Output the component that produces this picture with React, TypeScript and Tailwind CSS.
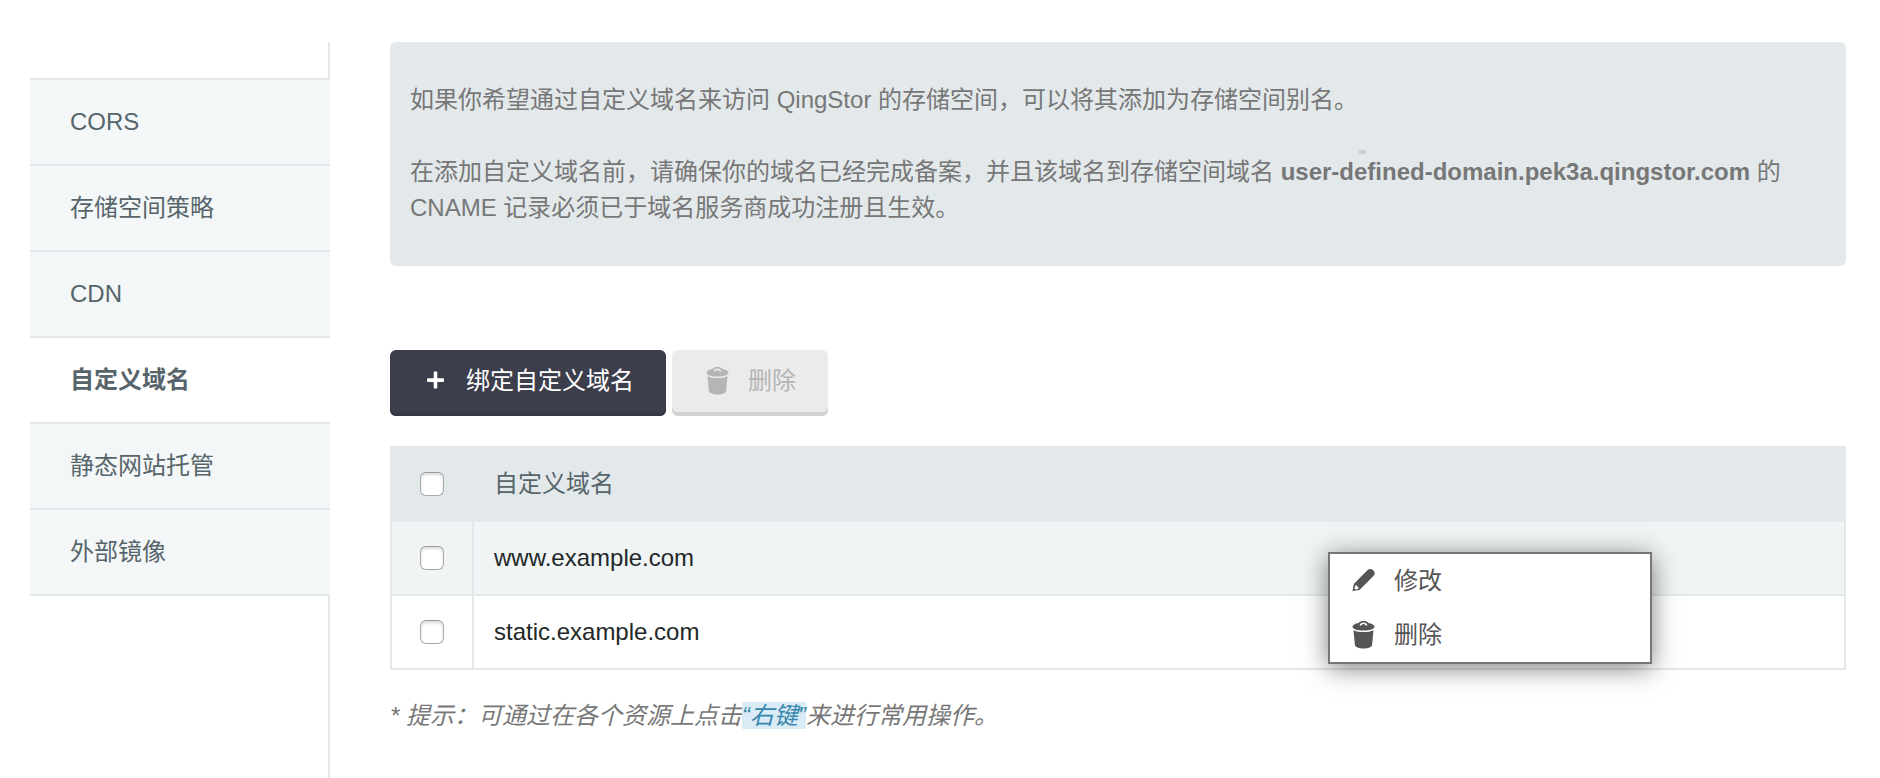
import type { ReactNode } from 'react';

const navItems = ['CORS', '存储空间策略', 'CDN', '自定义域名', '静态网站托管', '外部镜像'];
const activeItem = '自定义域名';
const domains = ['www.example.com', 'static.example.com'];

function PlusIcon() {
  return (
    <svg width="28" height="28" viewBox="0 0 28 28" fill="currentColor" aria-hidden="true">
      <rect x="5" y="11.300" width="17" height="3.600" rx="1" />
      <rect x="11.700" y="4.600" width="3.600" height="17" rx="1" />
    </svg>
  );
}

function TrashIcon() {
  return (
    <svg width="28" height="28" viewBox="0 0 28 28" fill="currentColor" aria-hidden="true">
      <path
        fillRule="evenodd"
        d="M2.500 5.800C2.500 3.900 5 2.500 8.700 1.900C9.600.6 11.300 0 13.500 0S17.400.6 18.300 1.900C22 2.500 24.500 3.900 24.500 5.800C24.500 8.200 19.600 9.600 13.500 9.600S2.500 8.200 2.500 5.800ZM9.600 4.600C10.600 4.900 11.100 4.500 11.700 3.900C12.200 3.300 12.800 3.100 13.500 3.100S14.800 3.300 15.300 3.900C15.900 4.500 16.400 4.900 17.400 4.600C17 2.800 15.700 1.600 13.500 1.600S10 2.800 9.600 4.600Z"
      />
      <path d="M3.500 9.200C6 10.500 9.700 11.100 13.500 11.100S21 10.500 23.500 9.200L22.100 24C21.800 26.200 18.200 27.500 13.500 27.500S5.200 26.200 4.900 24Z" />
    </svg>
  );
}

function PencilIcon() {
  return (
    <svg width="28" height="28" viewBox="0 0 28 28" fill="currentColor" aria-hidden="true">
      <path
        fillRule="evenodd"
        d="M2.500 24.300L3.800 17.100L17.400 3.300C19.200 1.500 21.200 1.400 23.200 3.300C25.200 5.200 25.200 7.200 23.400 9L9.700 22.800ZM5.300 18.400L4.600 21.700L5.500 22.500L8.400 21.700L8.200 19.800L6.800 19.600L6.600 18Z"
      />
    </svg>
  );
}

function Check({ label }: { label: string }) {
  return (
    <input
      type="checkbox"
      aria-label={label}
      className="block size-6 appearance-none rounded-md border border-[#aaaaaa] border-t-[#989898] bg-white shadow-[inset_0_2px_3px_rgba(0,0,0,0.14)] checked:bg-[#3c3e4c]"
    />
  );
}

function MenuItem({ icon, label }: { icon: ReactNode; label: string }) {
  return (
    <button type="button" role="menuitem" className="flex h-[54px] w-full items-center gap-4 px-5 text-left hover:bg-[#f2f6f7]">
      {icon}
      <span>{label}</span>
    </button>
  );
}

export default function App() {
  return (
    <div
      lang="zh-CN"
      className="flex min-h-screen bg-white pt-[42px] pr-[34px] pl-[30px] font-['Liberation_Sans','Noto_Sans_CJK_SC',sans-serif] text-2xl leading-9 text-[#777777]"
    >
      <nav className="flex w-[300px] shrink-0 flex-col text-[#57656b]">
        <div className="h-9 border-r-2 border-[#e3e9eb]" />
        <ul className="border-t-2 border-[#e3e9eb]">
          {navItems.map((item) => (
            <li key={item} className="border-b-2 border-[#e3e9eb]">
              <a
                href="#"
                aria-current={item === activeItem ? 'page' : undefined}
                className={
                  item === activeItem
                    ? 'flex h-[84px] items-center bg-white px-10 font-bold'
                    : 'flex h-[84px] items-center bg-[#f3f7f8] px-10'
                }
              >
                {item}
              </a>
            </li>
          ))}
        </ul>
        <div className="flex-1 border-r-2 border-[#e3e9eb]" />
      </nav>

      <main className="ml-[60px] min-w-0 flex-1">
        <section className="relative rounded-md bg-[#e3e9eb] px-5 py-10">
          <p>如果你希望通过自定义域名来访问 QingStor 的存储空间，可以将其添加为存储空间别名。</p>
          <p className="mt-9">
            在添加自定义域名前，请确保你的域名已经完成备案，并且该域名到存储空间域名{' '}
            <strong>user-defined-domain.pek3a.qingstor.com</strong> 的 CNAME 记录必须已于域名服务商成功注册且生效。
          </p>
          <span className="absolute top-[108px] right-[480px] h-1 w-[7px] bg-[#c9cdce]" />
        </section>

        <div className="mt-[84px] flex gap-1.5">
          <button
            type="button"
            className="flex h-[66px] items-center gap-4 rounded-md bg-[#3c3e4c] px-8 pb-1 text-white shadow-[inset_0_-4px_0_#363845]"
          >
            <PlusIcon />
            <span>绑定自定义域名</span>
          </button>
          <button
            type="button"
            disabled
            className="flex h-[66px] items-center gap-4 rounded-md bg-[#ebebeb] px-8 pb-1 text-[#b5b5b5] shadow-[inset_0_-4px_0_#d3d3d3]"
          >
            <TrashIcon />
            <span>删除</span>
          </button>
        </div>

        <div className="relative mt-[30px]">
          <table className="w-full border-separate border-spacing-0 border-x-2 border-[#e3e9eb] text-left">
            <thead>
              <tr className="h-[76px] bg-[#e3e9eb] text-[#57656b]">
                <th className="w-[82px] px-7 py-0">
                  <Check label="全选" />
                </th>
                <th className="px-5 py-0 font-normal">自定义域名</th>
              </tr>
            </thead>
            <tbody>
              {domains.map((domain) => (
                <tr key={domain} className="h-[74px] text-[#222828] odd:bg-[#f0f4f5]">
                  <td className="border-r-2 border-b-2 border-[#e3e9eb] px-7 py-0">
                    <Check label={domain} />
                  </td>
                  <td className="border-b-2 border-[#e3e9eb] px-5 py-0">{domain}</td>
                </tr>
              ))}
            </tbody>
          </table>
          <div
            role="menu"
            className="absolute top-[106px] right-[194px] w-[324px] border-2 border-[#777777] bg-white text-[#555555] shadow-[0_4px_24px_rgba(0,0,0,0.5)]"
          >
            <MenuItem icon={<PencilIcon />} label="修改" />
            <MenuItem icon={<TrashIcon />} label="删除" />
          </div>
        </div>

        <p className="mt-7 italic">
          * 提示：可通过在各个资源上点击<span className="bg-[#d9ecf6] text-[#3a87ad]">“右键”</span>来进行常用操作。
        </p>
      </main>
    </div>
  );
}
